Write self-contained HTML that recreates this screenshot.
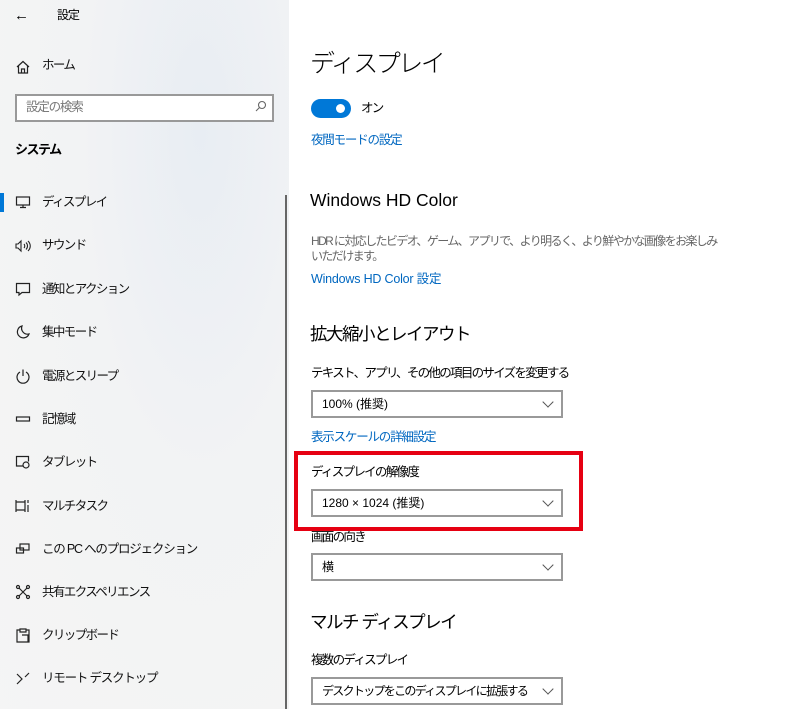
<!DOCTYPE html>
<html><head><meta charset="utf-8"><style>
*{margin:0;padding:0;box-sizing:border-box}
body{width:800px;height:709px;overflow:hidden;position:relative;background:#fff;font-family:"Liberation Sans","Noto Sans CJK JP",sans-serif;color:#000}
.side{position:absolute;left:0;top:0;width:289px;height:709px;background:radial-gradient(ellipse at 200px 130px,#e8edf3 0,#f2f3f4 120px,#f5f5f5 300px)}
.t{position:absolute;white-space:nowrap;line-height:1}
.ic{position:absolute;left:15px;width:16px;height:16px}
.it{position:absolute;left:42px;font-size:12.5px;letter-spacing:-1.6px;line-height:1;white-space:nowrap;color:#111}
.dd{position:absolute;left:311px;width:252px;height:28px;border:2px solid #999;background:#fff;font-size:12px;letter-spacing:-0.6px;padding-left:9px;line-height:24px;white-space:nowrap;overflow:hidden}
.dd:after{content:"";position:absolute;right:9px;top:6px;width:7px;height:7px;border-right:1px solid #555;border-bottom:1px solid #555;transform:rotate(45deg)}
.lnk{color:#0067c0;font-size:12.5px;letter-spacing:-1.2px}
.lb{font-size:12.5px;letter-spacing:-1.7px}
</style></head><body>
<div class="side">
<div class="t" style="left:14px;top:8px;font-size:15px">←</div>
<div class="t" style="left:57px;top:9px;font-size:12px;letter-spacing:-1px">設定</div>
<svg class="ic" style="top:59px" viewBox="0 0 16 16" fill="none" stroke="#222" stroke-width="1.2"><path d="M2 8L8 2.5 14 8M3.5 6.5V14h9V6.5M6.5 14V10h3v4"/></svg>
<div class="it" style="top:59px">ホーム</div>
<div style="position:absolute;left:15px;top:94px;width:259px;height:28px;border:2px solid #999;background:#fff"></div>
<div class="t" style="left:26px;top:101px;font-size:12.5px;letter-spacing:-1.2px;color:#777">設定の検索</div>
<svg style="position:absolute;left:254px;top:100px" width="13" height="13" viewBox="0 0 13 13" fill="none" stroke="#666" stroke-width="1.1"><circle cx="8" cy="5" r="3.5"/><path d="M5.5 7.5L2 11"/></svg>
<div class="t" style="left:15px;top:143px;font-size:13px;font-weight:bold;letter-spacing:-1.5px">システム</div>
<div style="position:absolute;left:0;top:193px;width:4px;height:19px;background:#0078d7"></div>
<svg class="ic" style="top:194px" viewBox="0 0 16 16" fill="none" stroke="#222" stroke-width="1.2"><rect x="1.5" y="3" width="13" height="8"/><path d="M8 11v2.5M5 13.5h6"/></svg>
<div class="it" style="top:196px">ディスプレイ</div>
<svg class="ic" style="top:238px" viewBox="0 0 16 16" fill="none" stroke="#222" stroke-width="1.1"><path d="M1 6h2l3-3v10l-3-3H1zM9 6c1 1 1 3 0 4M11 4.5c2 2 2 5 0 7M13 3c3 3 3 7 0 10"/></svg>
<div class="it" style="top:239px">サウンド</div>
<svg class="ic" style="top:281px" viewBox="0 0 16 16" fill="none" stroke="#222" stroke-width="1.2"><path d="M1.5 2.5h13v9H7l-3 2.5v-2.5H1.5z"/></svg>
<div class="it" style="top:283px">通知とアクション</div>
<svg class="ic" style="top:324px" viewBox="0 0 16 16" fill="none" stroke="#222" stroke-width="1.2"><path d="M7 2a6 6 0 1 0 7 8A6 6 0 0 1 7 2z"/></svg>
<div class="it" style="top:326px">集中モード</div>
<svg class="ic" style="top:368px" viewBox="0 0 16 16" fill="none" stroke="#222" stroke-width="1.2"><path d="M5 4a6 6 0 1 0 6 0M8 1.5V8"/></svg>
<div class="it" style="top:370px">電源とスリープ</div>
<svg class="ic" style="top:411px" viewBox="0 0 16 16" fill="none" stroke="#222" stroke-width="1.2"><rect x="1.5" y="6" width="13" height="4"/></svg>
<div class="it" style="top:413px">記憶域</div>
<svg class="ic" style="top:454px" viewBox="0 0 16 16" fill="none" stroke="#222" stroke-width="1.2"><path d="M8 12H1.5V2.5h12v5"/><circle cx="11" cy="11" r="3"/></svg>
<div class="it" style="top:456px">タブレット</div>
<svg class="ic" style="top:498px" viewBox="0 0 16 16" fill="none" stroke="#222" stroke-width="1.2"><path d="M1 2v12M10 2v12M1 4h9M1 12h9M13 2v3M13 7v7"/></svg>
<div class="it" style="top:500px">マルチタスク</div>
<svg class="ic" style="top:541px" viewBox="0 0 16 16" fill="none" stroke="#222" stroke-width="1.2"><rect x="5" y="3" width="9" height="6"/><rect x="1.5" y="7" width="7" height="5"/></svg>
<div class="it" style="top:543px;letter-spacing:-1.2px">この PC へのプロジェクション</div>
<svg class="ic" style="top:584px" viewBox="0 0 16 16" fill="none" stroke="#222" stroke-width="1.2"><circle cx="3" cy="3" r="1.5"/><circle cx="13" cy="3" r="1.5"/><circle cx="3" cy="13" r="1.5"/><circle cx="13" cy="13" r="1.5"/><path d="M4 4l8 8M12 4l-8 8"/></svg>
<div class="it" style="top:586px">共有エクスペリエンス</div>
<svg class="ic" style="top:627px" viewBox="0 0 16 16" fill="none" stroke="#222" stroke-width="1.2"><path d="M5 3H2v12h12V3h-3M5 2h6v3H5zM7 8h6v7"/></svg>
<div class="it" style="top:629px">クリップボード</div>
<svg class="ic" style="top:670px" viewBox="0 0 16 16" fill="none" stroke="#222" stroke-width="1.2"><path d="M2 4l5 5-5 5M14 3l-4 4"/></svg>
<div class="it" style="top:672px;letter-spacing:-1.2px">リモート デスクトップ</div>
<div style="position:absolute;left:285px;top:195px;width:2px;height:514px;background:#666"></div>
</div>

<div class="t" style="left:310px;top:52px;font-size:25px;font-weight:300;letter-spacing:-2.5px">ディスプレイ</div>
<div style="position:absolute;left:311px;top:99px;width:40px;height:19px;border-radius:10px;background:#0078d7"></div>
<div style="position:absolute;left:336px;top:104px;width:9px;height:9px;border-radius:50%;background:#fff"></div>
<div class="t lb" style="left:361px;top:102px">オン</div>
<div class="t lnk" style="left:311px;top:134px">夜間モードの設定</div>
<div class="t" style="left:310px;top:192px;font-size:17.5px">Windows HD Color</div>
<div class="t" style="left:311px;top:235px;font-size:12px;color:#666;letter-spacing:-1.6px">HDR に対応したビデオ、ゲーム、アプリで、より明るく、より鮮やかな画像をお楽しみ</div>
<div class="t" style="left:311px;top:250px;font-size:12px;color:#666;letter-spacing:-1.6px">いただけます。</div>
<div class="t lnk" style="left:311px;top:273px;letter-spacing:-0.2px">Windows HD Color 設定</div>
<div class="t" style="left:310px;top:326px;font-size:17.5px;letter-spacing:-1.5px">拡大縮小とレイアウト</div>
<div class="t lb" style="left:311px;top:367px">テキスト、アプリ、その他の項目のサイズを変更する</div>
<div class="dd" style="top:390px;letter-spacing:0">100% (推奨)</div>
<div class="t lnk" style="left:311px;top:431px">表示スケールの詳細設定</div>
<div class="t lb" style="left:311px;top:466px">ディスプレイの解像度</div>
<div class="dd" style="top:489px;letter-spacing:0">1280 × 1024 (推奨)</div>
<div class="t lb" style="left:311px;top:531px">画面の向き</div>
<div class="dd" style="top:553px">横</div>
<div class="t" style="left:310px;top:614px;font-size:17.5px;letter-spacing:-1.5px">マルチ ディスプレイ</div>
<div class="t lb" style="left:311px;top:654px">複数のディスプレイ</div>
<div class="dd" style="top:677px;letter-spacing:-1.7px">デスクトップをこのディスプレイに拡張する</div>
<div style="position:absolute;left:294px;top:451px;width:289px;height:80px;border:4px solid #e60012"></div>
</body></html>
